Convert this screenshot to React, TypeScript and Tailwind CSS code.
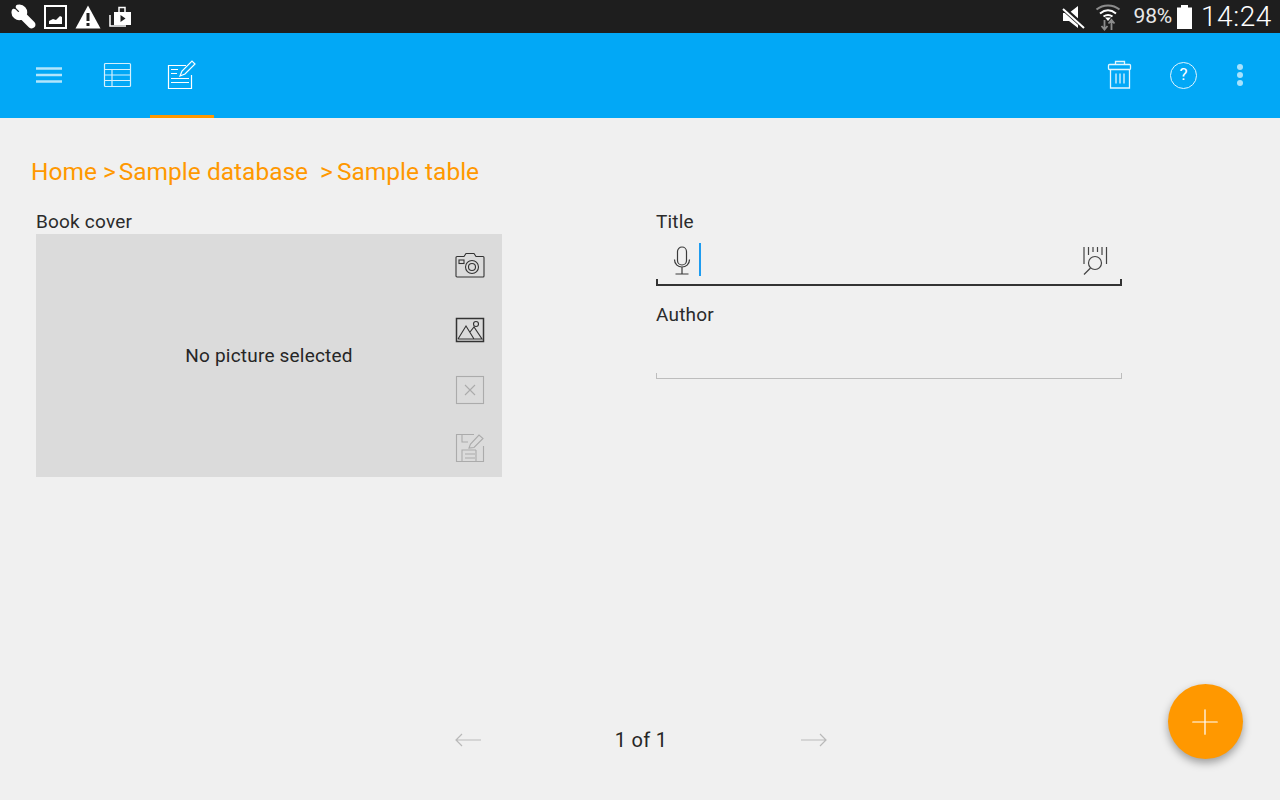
import { Wrench, Plus } from 'lucide-react';

function MenuIcon() {
    return (
        <svg width="26" height="18" viewBox="0 0 26 18" fill="none" stroke="#b3e5fc" strokeWidth="2.6">
            <path d="M0 2.500h26M0 9h26M0 15.500h26" />
        </svg>
    );
}

function TableIcon() {
    return (
        <svg width="30" height="26" viewBox="0 0 30 26" fill="none" stroke="#d4f0fd" strokeWidth="1.2">
            <rect x="2.5" y="1.5" width="26" height="23" rx="1" />
            <path d="M2.5 7.5h26M2.5 13h26M2.5 18.500h26M10 7.5v17" />
        </svg>
    );
}

function FormIcon() {
    return (
        <svg width="30" height="30" viewBox="0 0 30 30" fill="none" stroke="#fff" strokeWidth="1.2">
            <path d="M19 6.500H1.500v23h23V16" />
            <path d="M4 10.500h7M4 14.500h6M4 19.500h18M4 23.500h18" />
            <path d="M13 17l2-5L25 2l3 3-10 10-5 2z" />
        </svg>
    );
}

function TrashIcon() {
    return (
        <svg width="26" height="30" viewBox="0 0 26 30" fill="none" stroke="#e1f5fe" strokeWidth="1.3">
            <path d="M8.5 4V1.5h9V4" />
            <rect x="1.5" y="4.500" width="22" height="5" rx="1" />
            <path d="M3.500 9.500V28h19V9.500M9 13.500v10M13 13.500v10M17 13.500v10" />
        </svg>
    );
}

function WifiIcon() {
    return (
        <svg width="26" height="28" viewBox="0 0 26 28" fill="none">
            <path d="M1.500 6.500C8 1 18 1 24.500 6.500" stroke="#8c8c8c" strokeWidth="2" />
            <path d="M5 10.500C10 6.500 16 6.500 21 10.500" stroke="#fff" strokeWidth="2" />
            <path d="M8.500 13.500C11.500 11.500 14.500 11.500 17.500 13.500" stroke="#fff" strokeWidth="2" />
            <path d="M13 18l-3-3.500h6z" fill="#fff" />
            <path d="M9.500 17v9M6.500 23l3 3.500 3-3.500M16.500 27v-9M13.500 20.500l3-3.500 3 3.500" stroke="#8c8c8c" strokeWidth="1.800" />
        </svg>
    );
}

function StatusBar() {
    return (
        <div className="h-[33px] bg-[#1e1e1e] flex items-center justify-between pl-[11px] pr-[8px] shrink-0 shadow-[0_1px_1px_rgba(0,0,0,0.25)]">
            <div className="flex items-center">
                <Wrench className="w-[25px] h-[25px] text-white -scale-x-100" strokeWidth={3} fill="#fff" />
                <svg width="23" height="24" viewBox="0 0 23 24" fill="none" className="ml-[8px]">
                    <rect x="1" y="1" width="21" height="22" stroke="#fff" strokeWidth="2" />
                    <path d="M5 19v-3l4-2 3 1 4-4 2 1v7z" fill="#fff" />
                </svg>
                <svg width="26" height="24" viewBox="0 0 26 24" className="ml-[8px]">
                    <path d="M13 0.500L25.500 23.500H0.500z" fill="#fff" />
                    <rect x="11.500" y="8" width="3" height="8" fill="#1e1e1e" />
                    <rect x="11.500" y="18" width="3" height="3" fill="#1e1e1e" />
                </svg>
                <svg width="23" height="24" viewBox="0 0 23 24" fill="none" className="ml-[8px]">
                    <path d="M1 10v11h16" stroke="#fff" strokeWidth="1.500" />
                    <path d="M5 7h17v13H5z" fill="#fff" />
                    <path d="M10 7V2.500h6V7" stroke="#fff" strokeWidth="1.500" />
                    <path d="M11.500 10l5 3.500-5 3.500z" fill="#1e1e1e" />
                </svg>
            </div>
            <div className="flex items-center">
                <svg width="24" height="24" viewBox="0 0 24 24" className="mr-[9px]">
                    <path d="M1 8h6l9-7v22l-9-7H1z" fill="#fff" />
                    <path d="M1 3l21 19" stroke="#1e1e1e" strokeWidth="5" />
                    <path d="M1 4l21 19" stroke="#fff" strokeWidth="2" />
                </svg>
                <WifiIcon />
                <span className="ml-[13px] text-[21px] text-[#e8e8e8] tracking-[-0.2px]">98%</span>
                <svg width="15" height="24" viewBox="0 0 15 24" className="ml-[5px]">
                    <path d="M4 0h7v2.500h4V24H0V2.500h4z" fill="#fff" />
                </svg>
                <span className="ml-[9px] text-[28px] font-light text-white tracking-[0.6px]">14:24</span>
            </div>
        </div>
    );
}

function Toolbar() {
    return (
        <div className="h-[85px] bg-[#02a8f6] flex items-center justify-between shrink-0">
            <div className="flex h-full">
                <div className="w-[86px] flex items-center justify-end pr-[24px] pb-[2px]">
                    <MenuIcon />
                </div>
                <div className="w-[64px] flex items-center justify-center pb-[2px] pr-[2px]">
                    <TableIcon />
                </div>
                <div className="w-[64px] flex items-center justify-center border-b-[3px] border-[#ff9800] pb-[1px]">
                    <FormIcon />
                </div>
            </div>
            <div className="flex items-center pr-[37px] pb-[1px]">
                <TrashIcon />
                <div className="ml-[37px] w-[27px] h-[27px] rounded-full border border-[#e1f5fe] flex items-center justify-center text-[17px] text-white">
                    ?
                </div>
                <div className="ml-[40px] flex flex-col gap-[2px]">
                    <div className="w-[6px] h-[6px] rounded-full bg-[#a8e2fc]" />
                    <div className="w-[6px] h-[6px] rounded-full bg-[#a8e2fc]" />
                    <div className="w-[6px] h-[6px] rounded-full bg-[#a8e2fc]" />
                </div>
            </div>
        </div>
    );
}

function Breadcrumb() {
    return (
        <div className="pl-[31px] pt-[38px] text-[24.5px] leading-[32px] text-[#ff9800] flex whitespace-pre">
            <span>Home</span>
            <span className="ml-[6px]">&gt;</span>
            <span className="ml-[3px]">Sample database</span>
            <span className="ml-[12px]">&gt;</span>
            <span className="ml-[4px]">Sample table</span>
        </div>
    );
}

function CoverPicker() {
    return (
        <div className="w-[466px] h-[243px] bg-[#dbdbdb] relative flex items-center justify-center">
            <span className="text-[19px] text-[#262626] tracking-[0.2px] mt-[1px]">No picture selected</span>
            <div className="absolute right-[17px] top-[18px] flex flex-col items-center">
                <svg width="30" height="26" viewBox="0 0 30 26" fill="none" stroke="#333" strokeWidth="1.100">
                    <path d="M2 4.500h7l2-3h8l2 3h7a1 1 0 0 1 1 1V24a1 1 0 0 1-1 1H2a1 1 0 0 1-1-1V5.500a1 1 0 0 1 1-1z" />
                    <circle cx="17" cy="15" r="6.500" />
                    <circle cx="17" cy="15" r="3.500" />
                    <rect x="4" y="8" width="5" height="3.500" />
                </svg>
                <svg width="30" height="26" viewBox="0 0 30 26" fill="none" stroke="#333" strokeWidth="1.100" className="mt-[39px]">
                    <rect x="1.500" y="1.500" width="27" height="23" strokeWidth="1.500" />
                    <path d="M3 22l8-13 8 13M15 15l4-5 8 12H3" />
                    <circle cx="21" cy="7" r="2.500" />
                </svg>
                <svg width="30" height="30" viewBox="0 0 30 30" fill="none" stroke="#ababab" strokeWidth="1.100" className="mt-[32px]">
                    <rect x="1.500" y="1.500" width="27" height="27" />
                    <path d="M10 10l10 10M20 10L10 20" />
                </svg>
                <svg width="30" height="30" viewBox="0 0 30 30" fill="none" stroke="#ababab" strokeWidth="1.100" className="mt-[28px]">
                    <path d="M19 1.500H1.500v27h27V13" />
                    <path d="M7 1.500V9h6M7 28.500V17h14M10 21h10M10 25h10M21 17v11.500" />
                    <path d="M14 15l1.500-4L24 2l4 3.500-9 9z" />
                </svg>
            </div>
        </div>
    );
}

function TextField({ label, active }: { label: string; active?: boolean }) {
    return (
        <div>
            <div className="text-[19px] leading-[22px] text-[#2b2b2b] pt-[1px] tracking-[0.2px]">{label}</div>
            <div
                className={`h-[53px] flex items-center justify-between pl-[17px] pr-[13px] relative ${
                    active ? 'border-b-2 border-[#333]' : 'border-b border-[#bdbdbd]'
                }`}
            >
                <div
                    className={`absolute left-0 bottom-0 h-[5px] ${active ? 'bg-[#333] w-[2px]' : 'bg-[#bdbdbd] w-px'}`}
                />
                <div
                    className={`absolute right-0 bottom-0 h-[5px] ${active ? 'bg-[#333] w-[2px]' : 'bg-[#bdbdbd] w-px'}`}
                />
                {active && (
                    <>
                        <div className="flex items-center gap-[8px] mt-[2px]">
                            <svg width="18" height="30" viewBox="0 0 18 30" fill="none" stroke="#3a3a3a" strokeWidth="1.200" className="mt-[3px]">
                                <rect x="4.500" y="1" width="9" height="18" rx="4.500" />
                                <path d="M1.500 13.500c0 10 15 10 15 0M9 21v7M2.500 28h13" />
                            </svg>
                            <div className="w-[2px] h-[33px] bg-[#1e9cf0]" />
                        </div>
                        <svg width="26" height="30" viewBox="0 0 26 30" fill="none" stroke="#444" strokeWidth="1.200" className="mt-[5px]">
                            <path d="M1 1v17M5.500 1v8M10 1v5M14.500 1v5M19 1v8M23.500 1v17" />
                            <circle cx="12" cy="17" r="6.500" fill="#f0f0f0" />
                            <path d="M7.500 22l-6.500 6.500" />
                        </svg>
                    </>
                )}
            </div>
        </div>
    );
}

function Pager() {
    return (
        <div className="flex items-center justify-between w-[372px] h-[50px] mx-auto translate-x-[1px] text-[#262626]">
            <svg width="26" height="14" viewBox="0 0 26 14" fill="none" stroke="#b9b9b9" strokeWidth="1.200">
                <path d="M26 7H1M7 1L1 7l6 6" />
            </svg>
            <span className="text-[20px] tracking-[0.3px]">1 of 1</span>
            <svg width="26" height="14" viewBox="0 0 26 14" fill="none" stroke="#b9b9b9" strokeWidth="1.200">
                <path d="M0 7h25M19 1l6 6-6 6" />
            </svg>
        </div>
    );
}

export default function App() {
    return (
        <div
            className="w-[1280px] h-[800px] bg-[#f0f0f0] flex flex-col relative overflow-hidden"
            style={{ fontFamily: 'Roboto, sans-serif' }}
        >
            <StatusBar />
            <Toolbar />
            <div className="flex-1 flex flex-col">
                <Breadcrumb />
                <div className="flex pl-[36px] pt-[22px]">
                    <div>
                        <div className="text-[19px] leading-[22px] text-[#2b2b2b] pt-[1px] pb-[1px] tracking-[0.2px]">Book cover</div>
                        <CoverPicker />
                    </div>
                    <div className="w-[466px] ml-[154px] flex flex-col gap-[17px]">
                        <TextField label="Title" active />
                        <TextField label="Author" />
                    </div>
                </div>
                <div className="mt-auto mb-[35px]">
                    <Pager />
                </div>
            </div>
            <button className="absolute right-[37px] bottom-[41px] w-[75px] h-[75px] rounded-full bg-[#ff9800] flex items-center justify-center shadow-[0_4px_8px_rgba(0,0,0,0.35)]">
                <Plus className="w-[42px] h-[42px] text-white -translate-x-px" strokeWidth={0.7} />
            </button>
        </div>
    );
}
